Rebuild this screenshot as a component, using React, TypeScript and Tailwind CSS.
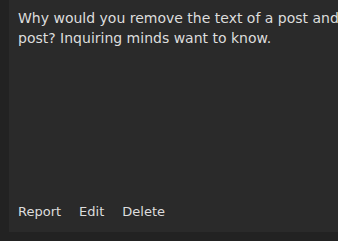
export default function App() {
  return (
    <div className="flex h-[241px] w-[338px] overflow-hidden bg-[#222222] font-['DejaVu_Sans',sans-serif]">
      <div className="w-[9px] shrink-0" />
      {/* Post card */}
      <div className="flex h-[232px] w-[420px] shrink-0 flex-col bg-[#2a2a2a] pl-[9px]">
        <p className="mt-[8px] w-[400px] text-[14px] leading-[20px] text-[#dddddd]">
          Why would you remove the text of a post and leave the post? Inquiring minds want to know.
        </p>
        <div className="mt-auto mb-[11px] flex gap-[18px] text-[13px] leading-[18px] text-[#dddddd]">
          <span>Report</span>
          <span>Edit</span>
          <span>Delete</span>
        </div>
      </div>
    </div>
  );
}
